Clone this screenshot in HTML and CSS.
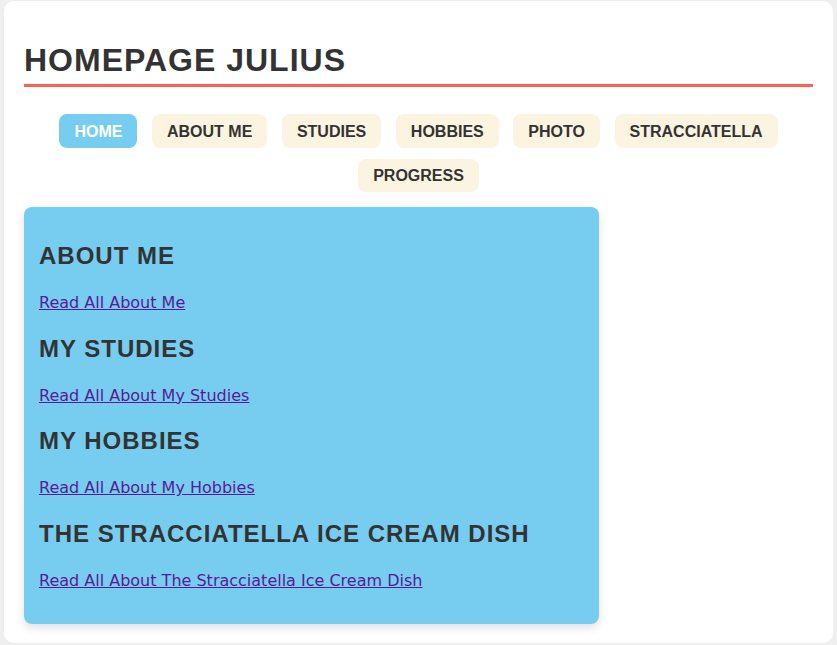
FILE: index.html
```html
<!DOCTYPE html>
<html lang="en">
<head>
<meta charset="utf-8">
<title>Homepage Julius</title>
<link rel="stylesheet" href="styles.css">
</head>
<body>
<div class="page">
  <header class="header">
    <h1 class="title">HOMEPAGE JULIUS</h1>
  </header>
  <nav class="nav">
    <a class="nav-btn active" href="#">HOME</a>
    <a class="nav-btn" href="#">ABOUT ME</a>
    <a class="nav-btn" href="#">STUDIES</a>
    <a class="nav-btn" href="#">HOBBIES</a>
    <a class="nav-btn" href="#">PHOTO</a>
    <a class="nav-btn" href="#">STRACCIATELLA</a>
    <a class="nav-btn" href="#">PROGRESS</a>
  </nav>
  <main class="card">
    <h2 class="card-title">ABOUT ME</h2>
    <p class="card-text"><a class="card-link" href="#">Read All About Me</a></p>
    <h2 class="card-title">MY STUDIES</h2>
    <p class="card-text"><a class="card-link" href="#">Read All About My Studies</a></p>
    <h2 class="card-title">MY HOBBIES</h2>
    <p class="card-text"><a class="card-link" href="#">Read All About My Hobbies</a></p>
    <h2 class="card-title">THE STRACCIATELLA ICE CREAM DISH</h2>
    <p class="card-text"><a class="card-link" href="#">Read All About The Stracciatella Ice Cream Dish</a></p>
  </main>
</div>
</body>
</html>
```
FILE: styles.css
```css
html, body {
  margin: 0;
  height: 100%;
}
body {
  background: #efefef;
  padding: 1px 4px 2px 4px;
  box-sizing: border-box;
  font-family: "Liberation Sans", Arial, sans-serif;
  color: #333;
}
.page {
  background: #ffffff;
  border-radius: 10px;
  height: 642px;
  box-sizing: border-box;
  padding: 0 20px 20px 20px;
  overflow: hidden;
}
.header {
  padding-top: 41px;
}
.title {
  margin: 0;
  font-size: 32px;
  line-height: 36.8px;
  font-weight: bold;
  letter-spacing: 1px;
  color: #333;
  padding-bottom: 5px;
  border-bottom: 3px solid #ff6150;
}
.nav {
  display: flex;
  flex-wrap: wrap;
  justify-content: center;
  column-gap: 14.6px;
  row-gap: 10.6px;
  margin-top: 27.7px;
}
.nav-btn {
  display: block;
  background: #fbf4e0;
  color: #333;
  text-decoration: none;
  font-weight: bold;
  font-size: 16px;
  line-height: 19px;
  padding: 7.3px 15px;
  border-radius: 8px;
}
.nav-btn.active {
  background: #76cdf0;
  color: #ffffff;
}
.card {
  display: block;
  width: 575px;
  box-sizing: border-box;
  margin-top: 15px;
  background: #76cdf0;
  border-radius: 8px;
  padding: 15px 15px 15px 15px;
  box-shadow: 0 4px 8px rgba(0, 0, 0, 0.12);
}
.card-title {
  margin: 22px 0 24px 0;
  font-size: 24px;
  line-height: 28px;
  font-weight: bold;
  letter-spacing: 1px;
  color: #333;
}
.card-title:first-child {
  margin-top: 20px;
}
.card-text {
  margin: 0 0 18px 0;
  font-family: "DejaVu Sans", Verdana, sans-serif;
  font-size: 16px;
  line-height: 18.6px;
}
.card-link {
  color: #5a1a94;
  text-decoration: underline;
}
```
